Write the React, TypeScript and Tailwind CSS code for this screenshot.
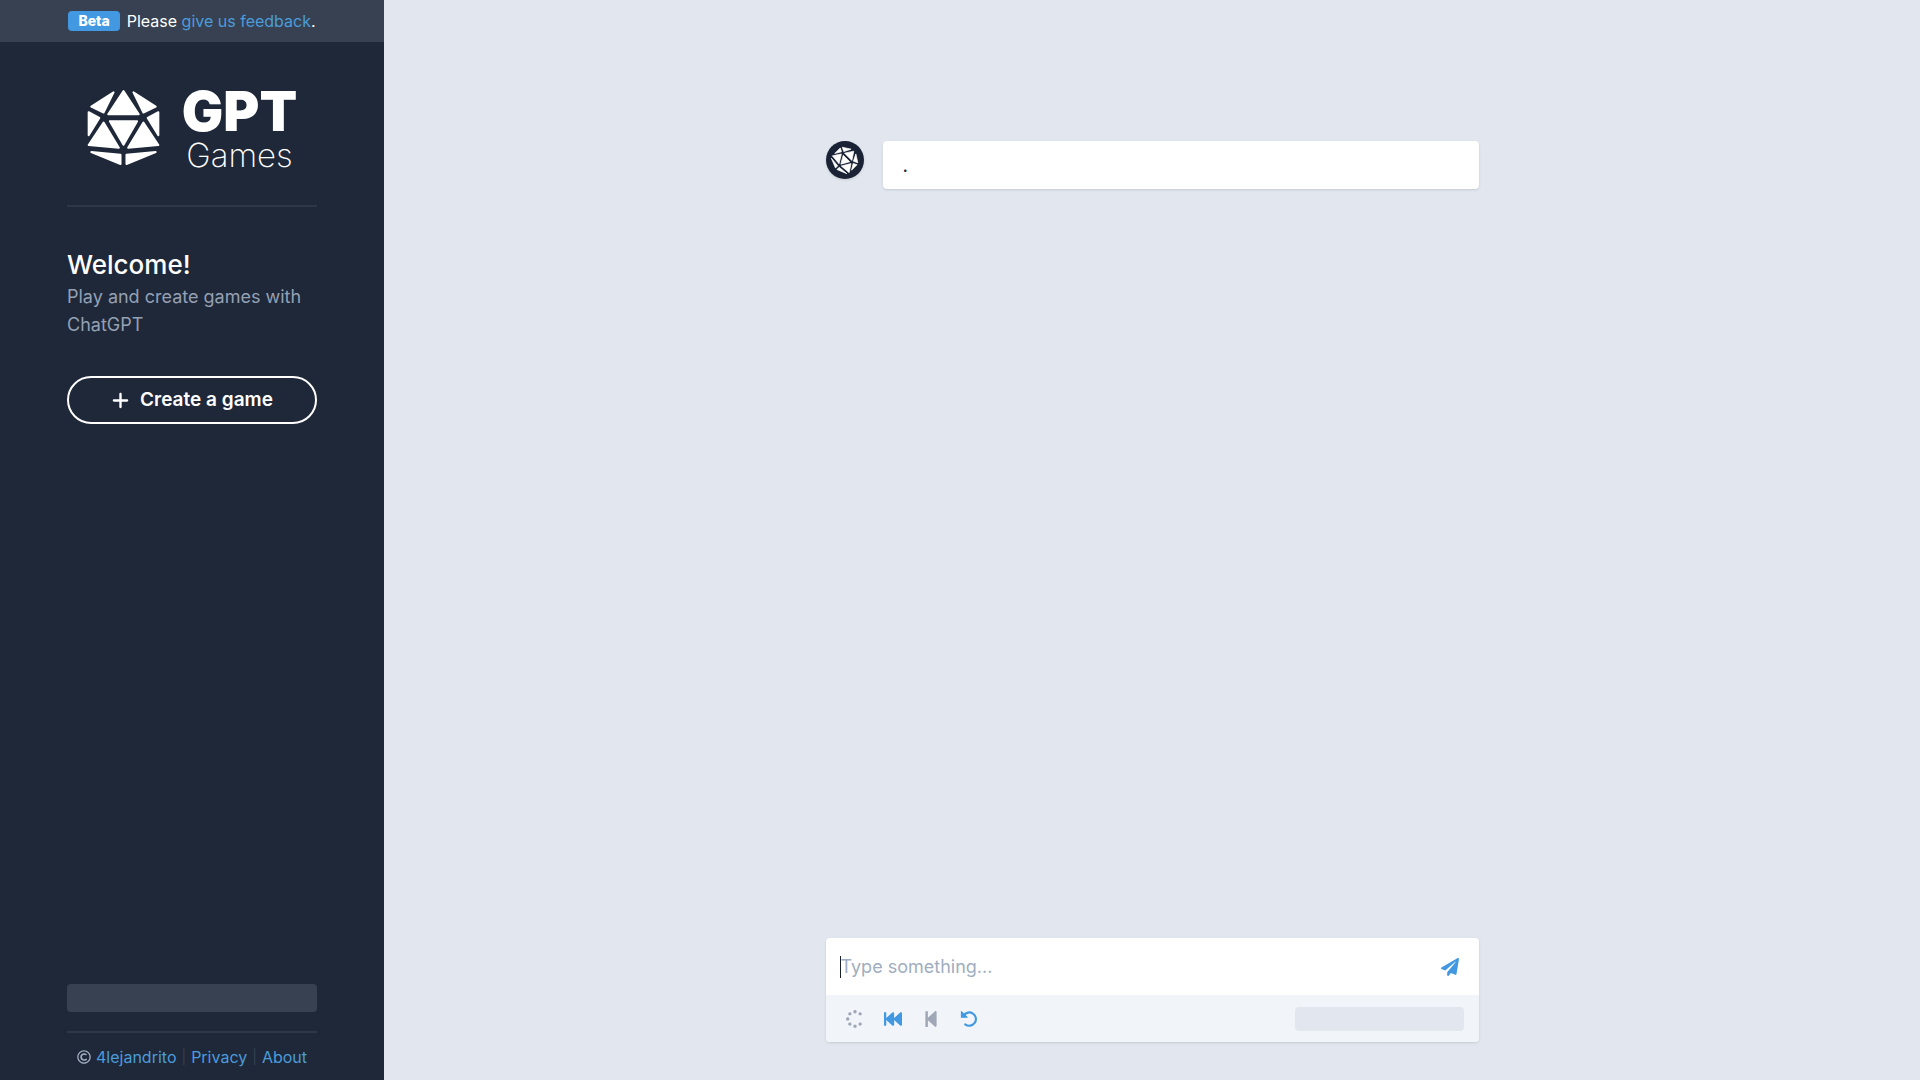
import { FaFastBackward, FaPaperPlane, FaRegCopyright, FaSpinner, FaStepBackward } from "react-icons/fa";
import { FaPlus } from "react-icons/fa6";

function Die({ className }: { className: string }) {
  return (
    <svg viewBox="262 264 220 230" className={className} fill="currentColor" stroke="currentColor" strokeWidth="6" strokeLinejoin="round" aria-hidden="true">
      <path d="M372 269 L418 339 H326 Z" />
      <path d="M342 273 L275 316 L312 334 Z" />
      <path d="M402 273 L469 316 L432 334 Z" />
      <path d="M267 333 L299 350 L267 402 Z" />
      <path d="M477 333 L445 350 L477 402 Z" />
      <path d="M331 360 H413 L372 431 Z" />
      <path d="M312 364 L267 432 L358 440 Z" />
      <path d="M432 364 L477 432 L386 440 Z" />
      <path d="M275 453 L363 461 V489 Z" />
      <path d="M469 453 L381 461 V489 Z" />
    </svg>
  );
}

function UndoIcon() {
  return (
    <svg viewBox="0 0 16 16" className="size-[18px]" fill="none" aria-hidden="true">
      <path d="M3.2 5 A5.9 5.9 0 1 1 4.6 12.7" stroke="currentColor" strokeWidth="1.9" strokeLinecap="round" />
      <path d="M1.2 1.4 V6.4 H6.3 Z" fill="currentColor" stroke="currentColor" strokeWidth="0.9" strokeLinejoin="round" />
    </svg>
  );
}

export default function App() {
  return (
    <div className="flex min-h-screen bg-[#e2e7ef] font-['Inter',sans-serif] text-[#1f2839]">
      <aside className="flex w-96 shrink-0 flex-col bg-[#1f2839] text-white">
        <div className="flex h-[42px] items-center justify-center bg-[#374151] text-base">
          <span className="mr-[7px] rounded bg-[#4299e1] px-2.5 text-sm leading-5 font-extrabold">Beta</span>
          <p>
            Please <a href="#feedback" className="text-[#4b9cdb]">give us feedback</a>.
          </p>
        </div>
        <div className="flex grow flex-col px-[67px]">
          <header className="flex h-[165px] items-center justify-center gap-[22px] border-b-2 border-[#2d3748] pt-2">
            <Die className="h-[77px] w-[73px]" />
            <div className="pt-1 text-center">
              <div className="text-[55px] leading-[50px] font-black">GPT</div>
              <div className="text-[33px] leading-[38px] font-extralight">Games</div>
            </div>
          </header>
          <h1 className="mt-10 text-[26px] leading-9 font-medium">Welcome!</h1>
          <p className="text-lg leading-7 text-[#94a0b3]">Play and create games with ChatGPT</p>
          <button className="mt-[37px] flex h-12 items-center justify-center gap-2.5 rounded-full border-2 border-white text-[19px] font-semibold">
            <FaPlus className="size-[19px]" />
            Create a game
          </button>
          <div className="mt-auto h-7 rounded bg-[#374151]" />
          <footer className="mt-[19px] flex h-[49px] items-center justify-center gap-[5px] border-t-2 border-[#2d3748] text-base text-[#4b9cdb]">
            <FaRegCopyright className="size-3.5 text-[#a0aec0]" />
            <a href="#author">4lejandrito</a>
            <span className="text-sm text-[#374151]">|</span>
            <a href="#privacy">Privacy</a>
            <span className="text-sm text-[#374151]">|</span>
            <a href="#about">About</a>
          </footer>
        </div>
      </aside>
      <main className="flex grow flex-col items-center px-9 pt-[141px] pb-[38px]">
        <section className="flex w-full max-w-[653px] gap-[19px]">
          <div className="flex size-[38px] shrink-0 items-center justify-center rounded-full bg-[#1a2235] text-white shadow-sm">
            <Die className="size-[26px] rotate-45" />
          </div>
          <p className="h-12 grow rounded bg-white px-5 pt-[11px] text-[19px] leading-7 shadow-sm">.</p>
        </section>
        <form className="mt-auto w-full max-w-[653px] overflow-hidden rounded bg-white shadow-sm">
          <div className="flex h-[57px] items-center pr-5 pl-3.5">
            <span className="h-[22px] w-px bg-[#1a202c]" />
            <input aria-label="Message" placeholder="Type something..." className="h-7 grow text-lg outline-none placeholder:text-[#a0aec0]" />
            <button type="button" aria-label="Send" className="text-[#4299e1]"><FaPaperPlane className="size-[18px]" /></button>
          </div>
          <div className="flex h-[47px] items-center bg-[#f1f5f9] pr-[15px] pl-5 text-[#4299e1]">
            <button type="button" aria-label="Loading" className="mr-5 text-[#a0a8b8]"><FaSpinner className="size-[18px] rotate-45" /></button>
            <button type="button" aria-label="Go to start" className="mr-5"><FaFastBackward className="size-[18px]" /></button>
            <button type="button" aria-label="Step back" className="mr-5 text-[#a0a8b8]"><FaStepBackward className="size-[18px]" /></button>
            <button type="button" aria-label="Undo"><UndoIcon /></button>
            <div className="ml-auto h-6 w-[169px] rounded bg-[#e2e7ef]" />
          </div>
        </form>
      </main>
    </div>
  );
}
